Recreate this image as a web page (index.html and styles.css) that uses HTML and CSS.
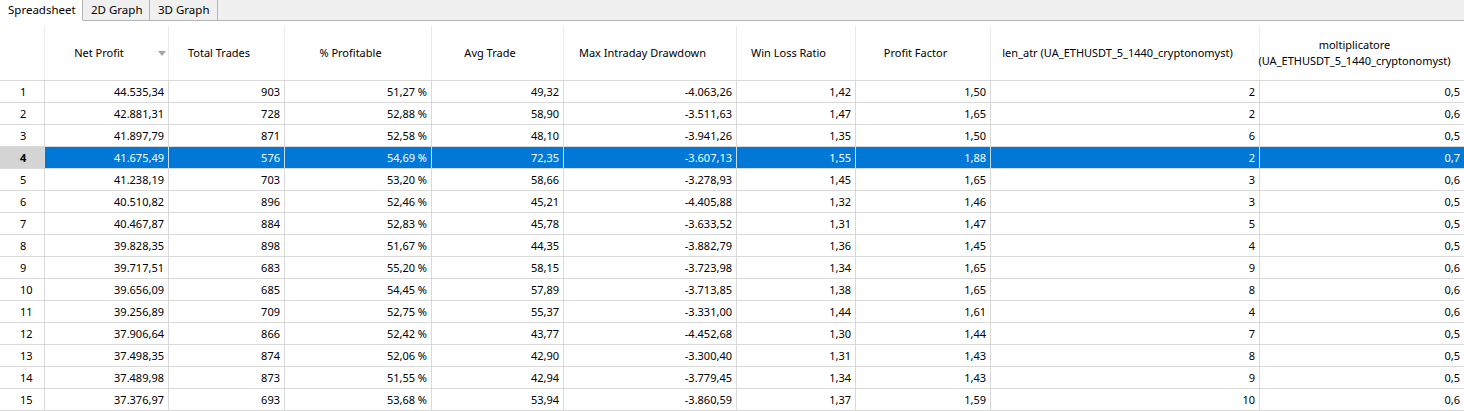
FILE: index.html
```html
<!DOCTYPE html>
<html>
<head>
<meta charset="utf-8">
<link rel="stylesheet" href="styles.css">
</head>
<body>
<div class="app">
  <div class="tabs">
    <div class="tab active">Spreadsheet</div>
    <div class="tab">2D Graph</div>
    <div class="tab">3D Graph</div>
    <div class="tab-fill"></div>
  </div>
  <div class="grid">
    <div class="row head">
      <div class="hc corner"></div>
      <div class="hc sorted">Net Profit<span class="sort"></span></div>
      <div class="hc">Total Trades</div>
      <div class="hc">% Profitable</div>
      <div class="hc">Avg Trade</div>
      <div class="hc">Max Intraday Drawdown</div>
      <div class="hc">Win Loss Ratio</div>
      <div class="hc">Profit Factor</div>
      <div class="hc nowrap">len_atr (UA_ETHUSDT_5_1440_cryptonomyst)</div>
      <div class="hc">moltiplicatore (UA_ETHUSDT_5_1440_cryptonomyst)</div>
    </div>
    <div class="row"><div class="rn">1</div><div class="c">44.535,34</div><div class="c">903</div><div class="c">51,27 %</div><div class="c">49,32</div><div class="c">-4.063,26</div><div class="c">1,42</div><div class="c">1,50</div><div class="c">2</div><div class="c">0,5</div></div>
    <div class="row"><div class="rn">2</div><div class="c">42.881,31</div><div class="c">728</div><div class="c">52,88 %</div><div class="c">58,90</div><div class="c">-3.511,63</div><div class="c">1,47</div><div class="c">1,65</div><div class="c">2</div><div class="c">0,6</div></div>
    <div class="row"><div class="rn">3</div><div class="c">41.897,79</div><div class="c">871</div><div class="c">52,58 %</div><div class="c">48,10</div><div class="c">-3.941,26</div><div class="c">1,35</div><div class="c">1,50</div><div class="c">6</div><div class="c">0,5</div></div>
    <div class="row selected"><div class="rn">4</div><div class="c">41.675,49</div><div class="c">576</div><div class="c">54,69 %</div><div class="c">72,35</div><div class="c">-3.607,13</div><div class="c">1,55</div><div class="c">1,88</div><div class="c">2</div><div class="c">0,7</div></div>
    <div class="row"><div class="rn">5</div><div class="c">41.238,19</div><div class="c">703</div><div class="c">53,20 %</div><div class="c">58,66</div><div class="c">-3.278,93</div><div class="c">1,45</div><div class="c">1,65</div><div class="c">3</div><div class="c">0,6</div></div>
    <div class="row"><div class="rn">6</div><div class="c">40.510,82</div><div class="c">896</div><div class="c">52,46 %</div><div class="c">45,21</div><div class="c">-4.405,88</div><div class="c">1,32</div><div class="c">1,46</div><div class="c">3</div><div class="c">0,5</div></div>
    <div class="row"><div class="rn">7</div><div class="c">40.467,87</div><div class="c">884</div><div class="c">52,83 %</div><div class="c">45,78</div><div class="c">-3.633,52</div><div class="c">1,31</div><div class="c">1,47</div><div class="c">5</div><div class="c">0,5</div></div>
    <div class="row"><div class="rn">8</div><div class="c">39.828,35</div><div class="c">898</div><div class="c">51,67 %</div><div class="c">44,35</div><div class="c">-3.882,79</div><div class="c">1,36</div><div class="c">1,45</div><div class="c">4</div><div class="c">0,5</div></div>
    <div class="row"><div class="rn">9</div><div class="c">39.717,51</div><div class="c">683</div><div class="c">55,20 %</div><div class="c">58,15</div><div class="c">-3.723,98</div><div class="c">1,34</div><div class="c">1,65</div><div class="c">9</div><div class="c">0,6</div></div>
    <div class="row"><div class="rn">10</div><div class="c">39.656,09</div><div class="c">685</div><div class="c">54,45 %</div><div class="c">57,89</div><div class="c">-3.713,85</div><div class="c">1,38</div><div class="c">1,65</div><div class="c">8</div><div class="c">0,6</div></div>
    <div class="row"><div class="rn">11</div><div class="c">39.256,89</div><div class="c">709</div><div class="c">52,75 %</div><div class="c">55,37</div><div class="c">-3.331,00</div><div class="c">1,44</div><div class="c">1,61</div><div class="c">4</div><div class="c">0,6</div></div>
    <div class="row"><div class="rn">12</div><div class="c">37.906,64</div><div class="c">866</div><div class="c">52,42 %</div><div class="c">43,77</div><div class="c">-4.452,68</div><div class="c">1,30</div><div class="c">1,44</div><div class="c">7</div><div class="c">0,5</div></div>
    <div class="row"><div class="rn">13</div><div class="c">37.498,35</div><div class="c">874</div><div class="c">52,06 %</div><div class="c">42,90</div><div class="c">-3.300,40</div><div class="c">1,31</div><div class="c">1,43</div><div class="c">8</div><div class="c">0,5</div></div>
    <div class="row"><div class="rn">14</div><div class="c">37.489,98</div><div class="c">873</div><div class="c">51,55 %</div><div class="c">42,94</div><div class="c">-3.779,45</div><div class="c">1,34</div><div class="c">1,43</div><div class="c">9</div><div class="c">0,5</div></div>
    <div class="row"><div class="rn">15</div><div class="c">37.376,97</div><div class="c">693</div><div class="c">53,68 %</div><div class="c">53,94</div><div class="c">-3.860,59</div><div class="c">1,37</div><div class="c">1,59</div><div class="c">10</div><div class="c">0,6</div></div>
  </div>
</div>
</body>
</html>
```

FILE: styles.css
```css
html, body {
  margin: 0;
  padding: 0;
  background: #ffffff;
}
body {
  font-family: "Noto Sans", "Open Sans", sans-serif;
  font-size: 11px;
  color: #000;
}
.app {
  width: 1464px;
  height: 411px;
  overflow: hidden;
}
.tabs {
  display: flex;
  height: 21px;
  box-sizing: border-box;
  background: #f0f0f0;
  font-size: 11.5px;
}
.tab {
  height: 21px;
  box-sizing: border-box;
  padding: 0 0 0 8px;
  line-height: 20px;
  border-right: 1px solid #b4b4b4;
  border-bottom: 1px solid #b4b4b4;
  white-space: nowrap;
  overflow: hidden;
}
.tab.active {
  width: 83px;
  background: #ffffff;
  border-bottom-color: #ffffff;
}
.tab:nth-child(2) { width: 67px; }
.tab:nth-child(3) { width: 68px; }
.tab-fill {
  flex: 1;
  border-bottom: 1px solid #b4b4b4;
}
.row {
  display: grid;
  grid-template-columns: 45px 124px 116px 147px 132px 173px 119px 135px 269px 205px;
  height: 22px;
  width: 1465px;
}
.row.head {
  height: 60px;
  border-bottom: 1px solid #d9d9d9;
  box-sizing: border-box;
}
.hc {
  position: relative;
  display: flex;
  align-items: center;
  justify-content: center;
  text-align: center;
  padding: 4px 18px 0 2px;
  line-height: 16px;
  box-sizing: border-box;
  background-image: linear-gradient(#ececec, #ececec);
  background-size: 1px 54px;
  background-position: right bottom;
  background-repeat: no-repeat;
}
.hc.nowrap {
  white-space: nowrap;
}
.sort {
  position: absolute;
  right: 3px;
  top: 30px;
  width: 0;
  height: 0;
  border-left: 4.5px solid transparent;
  border-right: 4.5px solid transparent;
  border-top: 5px solid #a6a6a6;
}
.rn, .c {
  box-sizing: border-box;
  height: 22px;
  padding-top: 1px;
  line-height: 20px;
  border-right: 1px solid #d9d9d9;
  border-bottom: 1px solid #d9d9d9;
  white-space: nowrap;
  overflow: hidden;
}
.rn {
  padding-left: 20px;
}
.c {
  text-align: right;
  padding-right: 4px;
}
.row.selected .rn {
  background: #d4d4d4;
  font-weight: bold;
}
.row.selected .c {
  background: #0078d7;
  color: #ffffff;
  border-right-color: #c8ddf3;
}
```
